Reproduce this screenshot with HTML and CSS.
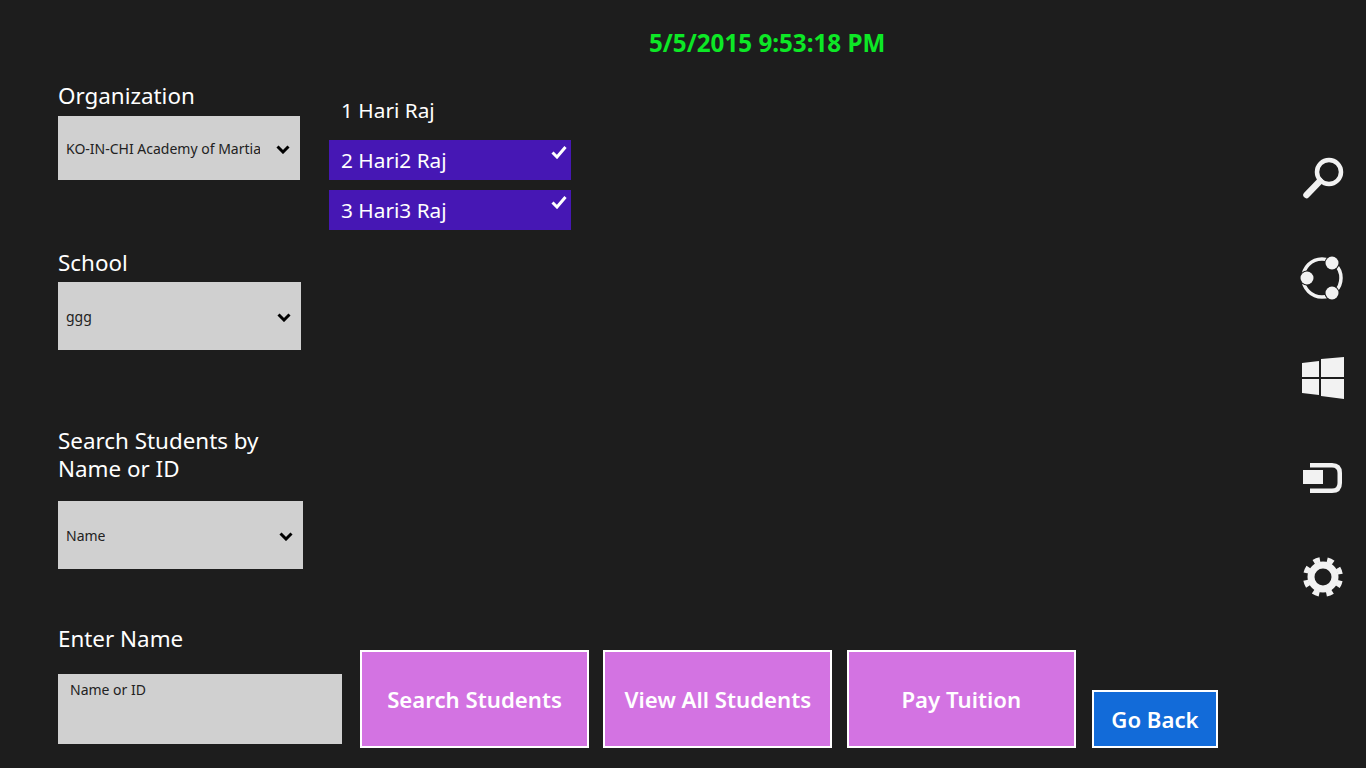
FILE: index.html
```html
<!DOCTYPE html>
<html lang="en">
<head>
  <meta charset="UTF-8">
  <title>Student Search</title>
  <link rel="stylesheet" href="styles.css">
</head>
<body>
  <div class="page">
    <div class="clock">5/5/2015 9:53:18 PM</div>

    <div class="main">
      <!-- search filters -->
      <div class="filters">
        <div class="label label-org">Organization</div>
        <div class="dropdown dropdown-org">
          <span class="dropdown-text">KO-IN-CHI Academy of Martia</span>
          <svg class="chevron" viewBox="0 0 14 10"><path d="M1.500 2.500L7 8l5.500-5.500"/></svg>
        </div>

        <div class="label label-school">School</div>
        <div class="dropdown dropdown-school">
          <span class="dropdown-text">ggg</span>
          <svg class="chevron" viewBox="0 0 14 10"><path d="M1.500 2.500L7 8l5.500-5.500"/></svg>
        </div>

        <div class="label label-search">Search Students by<br>Name or ID</div>
        <div class="dropdown dropdown-search">
          <span class="dropdown-text">Name</span>
          <svg class="chevron" viewBox="0 0 14 10"><path d="M1.500 2.500L7 8l5.500-5.500"/></svg>
        </div>

        <div class="label label-name">Enter Name</div>
        <div class="name-input">Name or ID</div>
      </div>

      <div class="content">
        <div class="students">
          <div class="student">1 Hari Raj</div>
          <div class="student selected">2 Hari2 Raj
            <svg class="check" viewBox="0 0 16 14"><path d="M1.500 7.500l4.500 4.500 8.500-10"/></svg>
          </div>
          <div class="student selected">3 Hari3 Raj
            <svg class="check" viewBox="0 0 16 14"><path d="M1.500 7.500l4.500 4.500 8.500-10"/></svg>
          </div>
        </div>

        <div class="actions">
          <button class="btn">Search Students</button>
          <button class="btn">View All Students</button>
          <button class="btn">Pay Tuition</button>
          <button class="btn-back">Go Back</button>
        </div>
      </div>

      <!-- charms bar -->
      <div class="charms">
        <svg class="charm" viewBox="0 0 50 50">
          <circle cx="31" cy="18" r="12" class="line"/>
          <path d="M22 27L8.500 41" class="line thick"/>
        </svg>
        <svg class="charm" viewBox="0 0 50 50">
          <circle cx="24" cy="24" r="19" class="line thin"/>
          <circle cx="34" cy="9" r="7.500" class="cut"/>
          <circle cx="9" cy="24" r="7.500" class="cut"/>
          <circle cx="34" cy="39" r="7.500" class="cut"/>
          <circle cx="34" cy="9" r="6.500" class="solid"/>
          <circle cx="9" cy="24" r="6.500" class="solid"/>
          <circle cx="34" cy="39" r="6.500" class="solid"/>
        </svg>
        <svg class="charm" viewBox="0 0 50 50">
          <path d="M4 9L21 7V23H4zM23 5L46 3V23H23zM4 25H21V41L4 39zM23 25H46V45L23 42z" class="solid"/>
        </svg>
        <svg class="charm" viewBox="0 0 50 50">
          <path d="M12 11.250H34Q41.750 11.250 41.750 19V29Q41.750 36.750 34 36.750H12" class="line"/>
          <rect x="5" y="16" width="20" height="14" class="solid"/>
        </svg>
        <svg class="charm" viewBox="0 0 50 50">
          <circle cx="25" cy="23" r="12" class="line gear-ring"/>
          <circle cx="25" cy="23" r="17.500" class="gear-teeth"/>
        </svg>
      </div>
    </div>
  </div>
</body>
</html>
```

FILE: styles.css
```css
* {
  box-sizing: border-box;
}
html, body {
  margin: 0;
  height: 100%;
  overflow: hidden;
}
body {
  background: #1d1d1d;
  color: #fff;
  font-family: "Noto Sans", "Open Sans", sans-serif;
}
.page {
  height: 768px;
  display: flex;
  flex-direction: column;
}
.clock {
  height: 84px;
  padding: 27px 0 0 649px;
  color: #0de826;
  font-size: 24.200px;
  line-height: 32px;
  font-weight: 700;
}
.main {
  flex: 1;
  display: flex;
  padding-left: 58px;
}

/* left column */
.filters {
  width: 284px;
  flex: none;
  display: flex;
  flex-direction: column;
  align-items: flex-start;
}
.label {
  font-size: 22.400px;
  line-height: 28px;
}
.label-org {
  margin-top: -2px;
}
.label-school {
  margin-top: 69px;
}
.label-search {
  margin-top: 77px;
}
.label-name {
  margin-top: 56px;
}
.dropdown {
  display: flex;
  align-items: center;
  background: #d0d0d0;
  color: #222;
  font-size: 14px;
  padding: 0 8px;
}
.dropdown-text {
  overflow: hidden;
  white-space: nowrap;
}
.dropdown-org {
  width: 242px;
  height: 64px;
  margin-top: 6px;
}
.dropdown-org .dropdown-text {
  width: 194px;
}
.dropdown-school {
  width: 243px;
  height: 68px;
  margin-top: 5px;
}
.dropdown-search {
  width: 245px;
  height: 68px;
  margin-top: 18px;
}
.chevron {
  width: 14px;
  height: 10px;
  margin-left: auto;
  margin-right: 2px;
  margin-top: 2px;
  fill: none;
  stroke: #000;
  stroke-width: 3;
}
.name-input {
  width: 284px;
  height: 70px;
  margin-top: 21px;
  background: #d0d0d0;
  color: #222;
  font-size: 14px;
  line-height: 20px;
  padding: 6px 12px;
}

/* students + buttons */
.content {
  flex: 1;
  display: flex;
  flex-direction: column;
}
.students {
  width: 242px;
  margin-left: -13px;
  margin-top: 6px;
  display: flex;
  flex-direction: column;
  gap: 10px;
}
.student {
  position: relative;
  height: 40px;
  padding-left: 12px;
  font-size: 20.800px;
  line-height: 40px;
}
.selected {
  background: #4617b4;
}
.check {
  position: absolute;
  top: 5px;
  right: 4px;
  width: 16px;
  height: 14px;
  fill: none;
  stroke: #fff;
  stroke-width: 3;
}
.actions {
  margin-top: auto;
  margin-bottom: 20px;
  margin-left: 18px;
  display: flex;
  align-items: flex-end;
}
.btn, .btn-back {
  font-family: inherit;
  color: #fff;
  font-weight: 600;
  font-size: 22.200px;
  border: 2px solid #fff;
  padding: 0;
}
.btn {
  width: 229px;
  height: 98px;
  margin-right: 14.400px;
  background: #d373e2;
}
.btn-back {
  width: 126px;
  height: 58px;
  margin-left: 1.800px;
  background: #126bd9;
}

/* charms */
.charms {
  position: absolute;
  top: 154px;
  right: 18px;
  display: flex;
  flex-direction: column;
  gap: 50px;
}
.charm {
  display: block;
  width: 50px;
  height: 50px;
}
.line {
  fill: none;
  stroke: #f2f2f2;
  stroke-width: 4.500;
}
.thick {
  stroke-width: 6.500;
  stroke-linecap: round;
}
.thin {
  stroke-width: 3.500;
}
.solid {
  fill: #f2f2f2;
}
.cut {
  fill: #1d1d1d;
}
.gear-ring {
  stroke-width: 7;
}
.gear-teeth {
  fill: none;
  stroke: #f2f2f2;
  stroke-width: 5;
  stroke-dasharray: 6.500 7.245;
  transform-origin: 25px 23px;
  transform: rotate(12deg);
}
```
